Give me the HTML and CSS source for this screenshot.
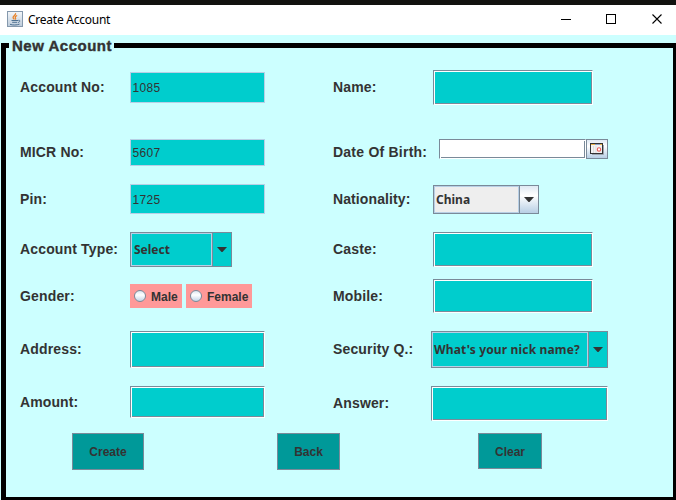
FILE: index.html
```html
<!DOCTYPE html>
<html lang="en">
<head>
<meta charset="utf-8">
<title>Create Account</title>
<link rel="stylesheet" href="styles.css">
</head>
<body>
<div class="window">
  <header class="titlebar">
    <svg class="java" width="16" height="16" viewBox="0 0 16 16">
      <defs><linearGradient id="jg" x1="0" y1="0" x2="0" y2="1"><stop offset="0" stop-color="#f4f7fa"/><stop offset="1" stop-color="#bccbda"/></linearGradient></defs>
      <rect x=".5" y=".5" width="15" height="15" fill="url(#jg)" stroke="#8599ad"/>
      <path d="M8.500 2.200c1 1.600-2.400 2.600-2.400 4.200 0 .9.9 1.400 1.300 2M10.200 4.500c-1.500.6-2.400 1.400-1.800 2.300.5.8.4 1.200-.2 1.700" fill="none" stroke="#e8832a" stroke-width="1.300"/>
      <path d="M4.500 9.500h6.500M5.200 11.300h5M3 13.300c2.500 1 7 .9 9.500-.2M11.300 9.300c2-.5 2.200 1.500-.2 2.200" fill="none" stroke="#4f7292"/>
    </svg>
    <span class="caption">Create Account</span>
    <svg class="controls" width="104" height="12" viewBox="0 0 104 12" shape-rendering="crispEdges">
      <path d="M0 6.500h10" stroke="#000"/>
      <rect x="45.500" y="1.500" width="9" height="9" fill="none" stroke="#000"/>
      <path d="M91.500 1.500l9 9M100.500 1.500l-9 9" stroke="#000" stroke-width="1.100" shape-rendering="auto"/>
    </svg>
  </header>
  <main class="content">
    <fieldset class="frame">
      <legend class="heading">New Account</legend>
      <form class="form">
        <span class="label r1">Account No:</span>
        <div class="plain h31 drop2">1085</div>
        <span class="label r1">Name:</span>
        <div class="sunken w160 h35 in2"></div>

        <span class="label r2">MICR No:</span>
        <div class="plain h27">5607</div>
        <span class="label r2 dob">Date Of Birth:</span>
        <div class="date">
          <div class="sunken white w147 h20"></div>
          <div class="calendar">
            <svg width="14" height="12" viewBox="0 0 14 12">
              <path d="M2 11.500h11.500V2" fill="none" stroke="#9aa4ae"/>
              <rect x=".5" y=".5" width="12" height="10" fill="#f2f2f2" stroke="#333"/>
              <path d="M1 1.500h11" stroke="#8ba0c4"/><path d="M1 1.500h4M10 1.500h2" stroke="#e8b44c"/>
              <path d="M3.500 3v7M6 3v7" stroke="#dedede"/>
              <circle cx="9" cy="6.500" r="1.700" fill="#fff" stroke="#ec5a55" stroke-width="1.100"/>
            </svg>
          </div>
        </div>

        <span class="label r3">Pin:</span>
        <div class="plain h30 pin">1725</div>
        <span class="label r3 tight">Nationality:</span>
        <div class="combo light w106 h29 in2 drop1"><span class="value china">China</span><span class="arrow"><svg width="10" height="5" viewBox="0 0 10 5"><path d="M0 0h10L5.500 5h-1z"/></svg></span></div>

        <span class="label r4">Account Type:</span>
        <div class="combo w102 h35"><span class="value">Select</span><span class="arrow"><svg width="10" height="5" viewBox="0 0 10 5"><path d="M0 0h10L5.500 5h-1z"/></svg></span></div>
        <span class="label r4">Caste:</span>
        <div class="sunken w160 h35 in2"></div>

        <span class="label r4">Gender:</span>
        <div class="radios">
          <div class="radio male"><i class="dot"></i>Male</div>
          <div class="radio female"><i class="dot"></i>Female</div>
        </div>
        <span class="label r4">Mobile:</span>
        <div class="sunken w160 h34 in2"></div>

        <span class="label r6">Address:</span>
        <div class="sunken w135 h37"></div>
        <span class="label r6">Security Q.:</span>
        <div class="combo w177 h37"><span class="value question">What's your nick name?</span><span class="arrow"><svg width="10" height="5" viewBox="0 0 10 5"><path d="M0 0h10L5.500 5h-1z"/></svg></span></div>

        <span class="label r7 tight">Amount:</span>
        <div class="sunken w135 h32"></div>
        <span class="label r7b">Answer:</span>
        <div class="sunken w177 h35"></div>
      </form>
      <div class="actions">
        <div class="btn create">Create</div>
        <div class="btn back">Back</div>
        <div class="btn clear">Clear</div>
      </div>
    </fieldset>
  </main>
</div>
</body>
</html>
```

FILE: styles.css
```css
* { box-sizing: border-box; }
body { margin: 0; width: 676px; height: 500px; overflow: hidden; background: #cff; color: #333; }
.window { width: 676px; height: 500px; display: flex; flex-direction: column; border-top: 5px solid #12120f; }
.titlebar { height: 30px; flex: none; display: flex; align-items: center; background: #fff; padding: 0 14px 0 7px; }
.java { margin-top: -2px; }
.caption { font: 12px/16px "Noto Sans", sans-serif; color: #000; margin-left: 5px; letter-spacing: -.25px; white-space: nowrap; }
.controls { margin-left: auto; margin-top: -2px; margin-right: -3px; }
.content { height: 465px; background: #cff; padding: 8px 0 0 1px; }
.frame { width: 677px; height: 457px; margin: 0; padding: 0; border: 5px solid #000; border-bottom-width: 3px; min-width: 0; }
.heading { font: 900 15px/5px "Liberation Sans", sans-serif; height: 5px; margin-left: 3px; padding: 0 2px 0 3px; width: 105px; white-space: nowrap; letter-spacing: .5px; -webkit-text-stroke: .4px #333; }
.form { display: grid; grid-template-columns: 110px 203px 98px 177px; grid-template-rows: 69px 45px 48px 47px 52px 55px 47px; margin: 22px 0 0 14px; align-items: start; }
.label { font: bold 14px/18px "Liberation Sans", sans-serif; white-space: nowrap; letter-spacing: .15px; }
.dob { letter-spacing: .23px; }
.tight { letter-spacing: .1px; }
.r1 { margin-top: 8px; } .r2 { margin-top: 4px; } .r3 { margin-top: 6px; } .r4 { margin-top: 8px; }
.r6 { margin-top: 9px; } .r7 { margin-top: 7px; } .r7b { margin-top: 8px; }
.plain { width: 135px; background: #00cdcd; border: 1px solid #b8cfe5; padding: 0 1.500px; font: 12px/1 "Liberation Sans", sans-serif; letter-spacing: .3px; display: flex; align-items: center; }
.pin { padding-top: 1px; }
.sunken { background: #00cdcd; border: 1px solid; border-color: #7a8a99 #fff #fff #7a8a99; box-shadow: inset 1px 1px #fff, inset -1px -1px #7a8a99; }
.white { background: #fff; }
.in2 { margin-left: 2px; }
.drop1 { margin-top: 1px; }
.drop2 { margin-top: 2px; }
.w102 { width: 102px; } .w106 { width: 106px; } .w135 { width: 135px; } .w147 { width: 147px; } .w160 { width: 160px; } .w177 { width: 177px; }
.h20 { height: 20px; } .h27 { height: 27px; } .h29 { height: 29px; } .h30 { height: 30px; } .h31 { height: 31px; }
.h32 { height: 32px; } .h34 { height: 34px; } .h35 { height: 35px; } .h37 { height: 37px; }
.date { display: flex; margin-left: 8px; }
.calendar { width: 22px; height: 20px; border: 1px solid #7a8a99; background: linear-gradient(#dfe9f3, #fff 35%, #b8cfe5); display: flex; align-items: center; justify-content: center; }
.combo { display: flex; border: 1px solid #7a8a99; background: #00cdcd; }
.value { flex: 1; display: flex; align-items: center; border: 1px solid #b8cfe5; font: bold 12px/1 "Noto Sans", sans-serif; white-space: nowrap; padding-left: 2px; }
.arrow { width: 19px; border-left: 1px solid #7a8a99; display: flex; align-items: center; justify-content: center; fill: #333; }
.light { background: #eee; }
.light .value { padding-left: 1px; }
.question { padding-left: 1px; letter-spacing: .16px; }
.light .arrow { background: linear-gradient(#dfe9f3, #fff 35%, #b8cfe5); }
.radios { display: flex; gap: 4px; margin-top: 5px; }
.radio { height: 24px; background: #f99; display: flex; align-items: center; font: bold 12px/14px "Liberation Sans", sans-serif; padding: 1px 0 0 4px; white-space: nowrap; }
.male { width: 52px; } .female { width: 66px; }
.dot { width: 12px; height: 12px; border-radius: 50%; border: 1px solid #7a8a99; background: linear-gradient(#dce6f0, #fff 40%, #c2d5e8); margin: -1px 5px 0 0; }
.actions { display: flex; padding-left: 66px; align-items: flex-start; }
.btn { height: 37px; background: #099; border: 1px solid #7a8a99; display: flex; align-items: center; justify-content: center; font: bold 12px/1 "Liberation Sans", sans-serif; }
.create { width: 72px; }
.back { width: 63px; margin-left: 133px; }
.clear { width: 64px; height: 36px; margin-left: 138px; padding-top: 1px; }
```
